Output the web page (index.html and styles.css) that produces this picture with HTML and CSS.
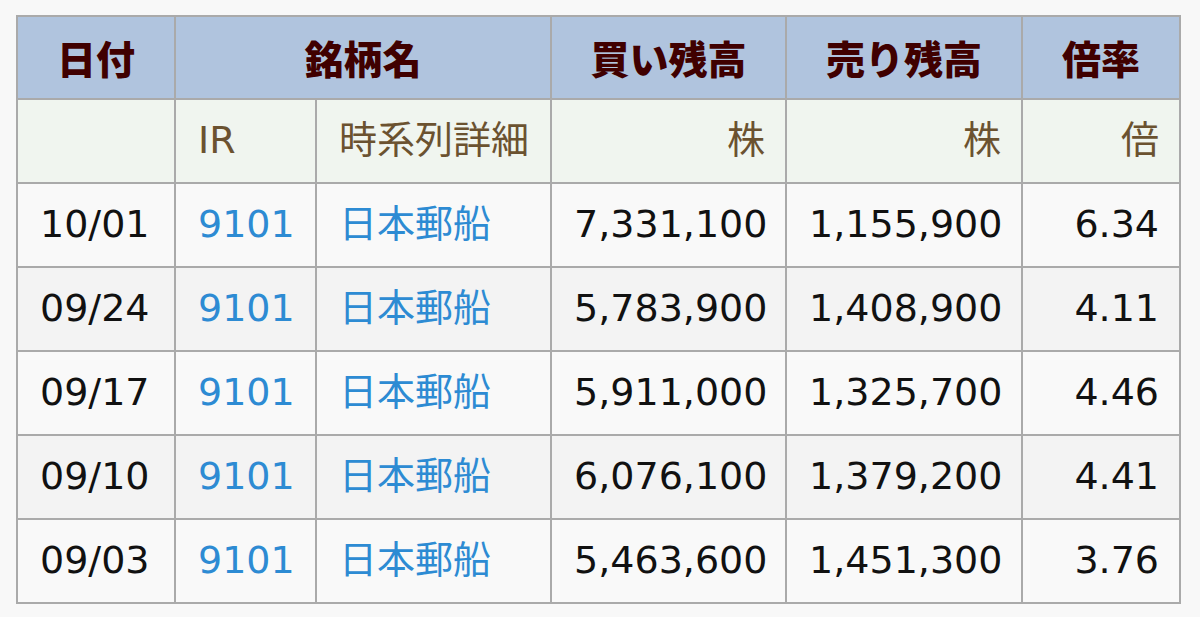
FILE: index.html
```html
<!DOCTYPE html>
<html lang="ja">
<head>
<meta charset="utf-8">
<title>信用残</title>
<link rel="stylesheet" href="styles.css">
</head>
<body>
<table class="zan">
  <colgroup>
    <col class="c-date"><col class="c-ir"><col class="c-name"><col class="c-buy"><col class="c-sell"><col class="c-rate">
  </colgroup>
  <thead>
    <tr class="head">
      <th>日付</th>
      <th colspan="2">銘柄名</th>
      <th>買い残高</th>
      <th>売り残高</th>
      <th>倍率</th>
    </tr>
    <tr class="sub">
      <td></td>
      <td>IR</td>
      <td>時系列詳細</td>
      <td class="num">株</td>
      <td class="num">株</td>
      <td class="num">倍</td>
    </tr>
  </thead>
  <tbody>
    <tr class="odd"><td>10/01</td><td><a href="#">9101</a></td><td><a href="#">日本郵船</a></td><td class="num">7,331,100</td><td class="num">1,155,900</td><td class="num">6.34</td></tr>
    <tr class="even"><td>09/24</td><td><a href="#">9101</a></td><td><a href="#">日本郵船</a></td><td class="num">5,783,900</td><td class="num">1,408,900</td><td class="num">4.11</td></tr>
    <tr class="odd"><td>09/17</td><td><a href="#">9101</a></td><td><a href="#">日本郵船</a></td><td class="num">5,911,000</td><td class="num">1,325,700</td><td class="num">4.46</td></tr>
    <tr class="even"><td>09/10</td><td><a href="#">9101</a></td><td><a href="#">日本郵船</a></td><td class="num">6,076,100</td><td class="num">1,379,200</td><td class="num">4.41</td></tr>
    <tr class="odd"><td>09/03</td><td><a href="#">9101</a></td><td><a href="#">日本郵船</a></td><td class="num">5,463,600</td><td class="num">1,451,300</td><td class="num">3.76</td></tr>
  </tbody>
</table>
</body>
</html>
```
FILE: styles.css
```css
html, body {
  margin: 0;
  background: #f8f8f8;
}
body {
  padding: 15px 16px;
  font-family: "DejaVu Sans", "Noto Sans CJK JP", sans-serif;
  font-size: 38px;
  color: #111;
}
.zan {
  border-collapse: collapse;
  table-layout: fixed;
  width: 1163px;
  border: 2px solid #aaaaaa;
}
.c-date { width: 158px; }
.c-ir { width: 141px; }
.c-name { width: 235px; }
.c-buy { width: 235px; }
.c-sell { width: 236px; }
.c-rate { width: 158px; }
.zan th, .zan td {
  border: 2px solid #aaaaaa;
  padding: 0 20px 0 22px;
  height: 82px;
  vertical-align: middle;
  text-align: left;
  white-space: nowrap;
  line-height: 1.2;
}
.zan tr.head th {
  background: #b0c4de;
  color: #400000;
  font-family: "Noto Sans CJK JP", sans-serif;
  font-size: 39px;
  font-weight: 800;
  text-align: center;
  padding: 0;
  height: 81px;
}
.zan tr.sub td {
  background: #f0f5ef;
  color: #6b5230;
}
.zan tr.odd td { background: #f9f9f9; }
.zan tr.even td { background: #f3f3f3; }
.zan td.num { text-align: right; }
.zan a {
  color: #2d8bd3;
  text-decoration: none;
}
```
